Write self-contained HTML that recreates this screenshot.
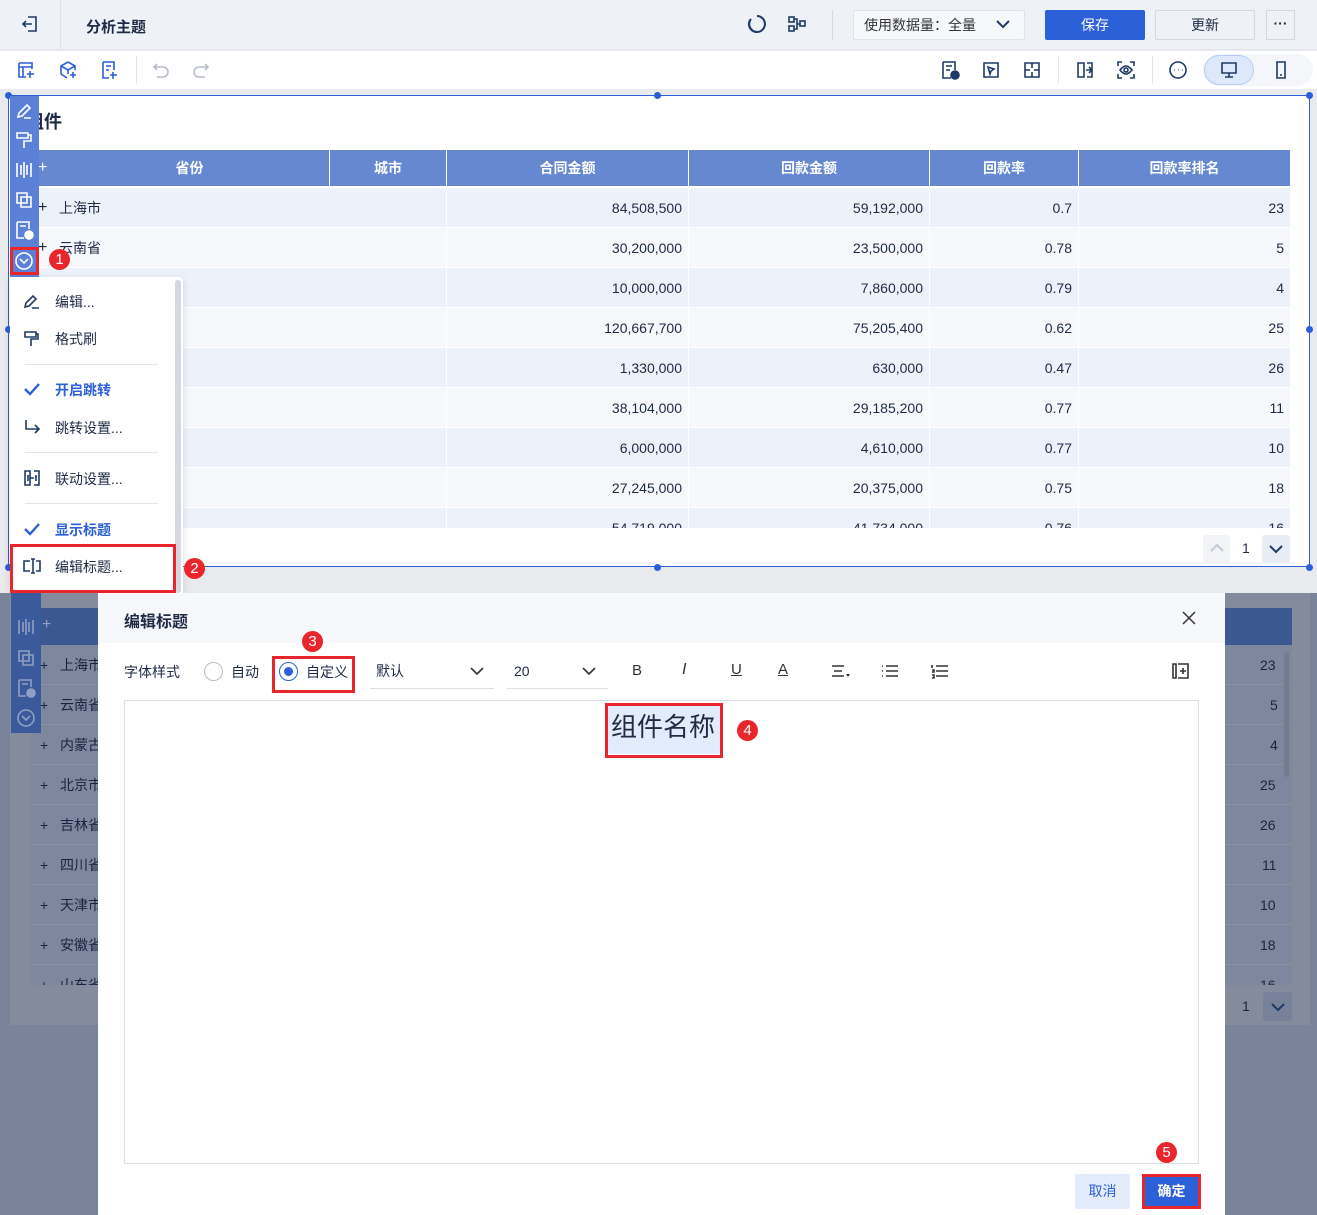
<!DOCTYPE html>
<html><head><meta charset="utf-8"><style>
*{box-sizing:border-box;margin:0;padding:0}
body{width:1317px;height:1215px;overflow:hidden;position:relative;background:#e8eaee;font-family:"Liberation Sans","Noto Sans CJK SC",sans-serif;color:#1f2a44;font-size:14px}
.a{position:absolute}
.ic{position:absolute;fill:none;stroke:#1f3a66;stroke-width:1.6}
.top{left:0;top:0;width:1317px;height:50px;background:#eef1f6;border-bottom:1px solid #e2e5ea}
.tb{left:0;top:51px;width:1317px;height:38px;background:#fff}
.hd{position:absolute;top:150px;height:36px;background:#6688d0;color:#fff;font-weight:bold;text-align:center;line-height:36px;font-size:14px;border-right:1px solid #fff}
.row{position:absolute;left:30px;width:1260px;height:40px;border-bottom:1px solid #fff}
.c{position:absolute;top:0;line-height:40px;text-align:right;font-size:14px;color:#1f2a44}
.badge{position:absolute;width:21px;height:21px;border-radius:50%;background:#e8262b;color:#fff;font-size:15px;line-height:21px;text-align:center}
.rb{position:absolute;border:3px solid #e8262b}
.mi{position:absolute;left:55px;font-size:14px;color:#1f2a44}
.sep{position:absolute;left:25px;width:133px;height:1px;background:#e3e5ea}
.orow{position:absolute;left:30px;width:1262px;height:40px;background:#7d879d;border-bottom:1px solid #8891a5}
.ot{position:absolute;left:30px;line-height:40px;color:#1a2440;font-size:14px}
.op{position:absolute;left:10px;line-height:40px;color:#1a2440}
</style></head><body>

<div class="a top"></div>
<svg class="ic" style="left:20px;top:14px" width="20" height="20" viewBox="0 0 20 20"><path d="M8 3h8v14H8M3 10h9M6 7l-3 3 3 3"/></svg>
<div class="a" style="left:60px;top:0;width:1px;height:50px;background:#dde1e8"></div>
<div class="a" style="left:86px;top:16px;font-weight:bold;font-size:15px">分析主题</div>
<svg class="ic" style="left:747px;top:14px;stroke-width:2" width="20" height="20" viewBox="0 0 20 20"><path d="M10 2a8 8 0 1 1-7 4M10 18A8 8 0 0 1 4 5"/></svg>
<svg class="ic" style="left:787px;top:15px" width="20" height="18" viewBox="0 0 20 18"><rect x="2" y="2" width="5" height="5"/><rect x="2" y="11" width="5" height="5"/><rect x="13" y="6" width="5" height="5"/><path d="M7 4h3v10H7M10 9h3"/></svg>
<div class="a" style="left:832px;top:10px;width:1px;height:30px;background:#d6dae2"></div>
<div class="a" style="left:853px;top:10px;width:172px;height:30px;background:#f6f8fb;border:1px solid #dfe3ea;border-radius:2px;line-height:28px;padding-left:10px;font-size:14px;color:#333">使用数据量：全量</div>
<svg class="ic" style="left:995px;top:18px;stroke-width:2" width="16" height="12" viewBox="0 0 16 12"><path d="M2 3l6 6 6-6"/></svg>
<div class="a" style="left:1045px;top:10px;width:100px;height:30px;background:#2b60d9;color:#fff;text-align:center;line-height:30px;border-radius:2px">保存</div>
<div class="a" style="left:1155px;top:10px;width:100px;height:30px;background:#eef1f6;border:1px solid #d3d7df;text-align:center;line-height:28px;border-radius:2px">更新</div>
<div class="a" style="left:1266px;top:10px;width:29px;height:30px;border:1px solid #d3d7df;text-align:center;line-height:24px;font-weight:bold">···</div>

<div class="a tb"></div>
<svg class="ic" style="left:16px;top:60px;stroke:#2b5fd9" width="20" height="20" viewBox="0 0 20 20"><path d="M3 3h13v6M3 3v14h7M3 7h13M7 7v10M14 11v7M11 14h7"/></svg>
<svg class="ic" style="left:58px;top:60px;stroke:#2b5fd9" width="20" height="20" viewBox="0 0 20 20"><path d="M10 2l7 4v4M10 2L3 6v8l6 4M3 6l7 4 7-4M10 10v4M15 12v6M12 15h6"/></svg>
<svg class="ic" style="left:99px;top:60px;stroke:#2b5fd9" width="20" height="20" viewBox="0 0 20 20"><path d="M4 2h11v8M4 2v16h6M7 6h5M7 10h3M14 12v7M11 15h7"/></svg>
<div class="a" style="left:136px;top:56px;width:1px;height:28px;background:#e3e5ea"></div>
<svg class="ic" style="left:151px;top:61px;stroke:#b6bcc8" width="20" height="18" viewBox="0 0 20 18"><path d="M6 3L3 6l3 3M3 6h9a5 5 0 0 1 0 10H6"/></svg>
<svg class="ic" style="left:191px;top:61px;stroke:#b6bcc8" width="20" height="18" viewBox="0 0 20 18"><path d="M14 3l3 3-3 3M17 6H8a5 5 0 0 0 0 10h6"/></svg>
<svg class="ic" style="left:940px;top:60px" width="20" height="20" viewBox="0 0 20 20"><path d="M3 2h12v8M3 2v16h8M6 6h6M6 10h4"/><circle cx="15" cy="15" r="4" fill="#1f3a66"/></svg>
<svg class="ic" style="left:981px;top:60px" width="20" height="20" viewBox="0 0 20 20"><path d="M3 3h14v14H3zM7 7l6 2-3 2-1 3z"/></svg>
<svg class="ic" style="left:1022px;top:60px" width="20" height="20" viewBox="0 0 20 20"><path d="M3 3h14v14H3zM10 3v5M10 12v5M3 10h5M12 10h5"/></svg>
<div class="a" style="left:1058px;top:56px;width:1px;height:28px;background:#e3e5ea"></div>
<svg class="ic" style="left:1075px;top:60px" width="20" height="20" viewBox="0 0 20 20"><path d="M3 3h6v14H3zM12 3h5v14h-5M11 10h6M14 7l3 3-3 3"/></svg>
<svg class="ic" style="left:1116px;top:60px" width="20" height="20" viewBox="0 0 20 20"><path d="M2 6V2h4M14 2h4v4M2 14v4h4M14 18h4v-4M4 10s3-4 6-4 6 4 6 4-3 4-6 4-6-4-6-4z"/><circle cx="10" cy="10" r="2"/></svg>
<div class="a" style="left:1152px;top:56px;width:1px;height:28px;background:#e3e5ea"></div>
<svg class="ic" style="left:1168px;top:60px" width="20" height="20" viewBox="0 0 20 20"><circle cx="10" cy="10" r="8"/><path d="M6 10h.5M10 10h.5M14 10h.5" stroke-width="2"/></svg>
<div class="a" style="left:1203px;top:54px;width:110px;height:32px;background:#f4f6fa;border-radius:16px"></div>
<div class="a" style="left:1204px;top:55px;width:50px;height:30px;background:#dde8fb;border:1px solid #b8cdf3;border-radius:15px"></div>
<svg class="ic" style="left:1219px;top:60px" width="20" height="20" viewBox="0 0 20 20"><path d="M3 3h14v10H3zM10 13v4M6 17h8"/></svg>
<svg class="ic" style="left:1271px;top:60px" width="20" height="20" viewBox="0 0 20 20"><path d="M6 2h8v16H6zM9 15h2"/></svg>

<div class="a" style="left:8px;top:95px;width:1302px;height:472px;background:#fff;border:1px solid #2b5fd9"></div>
<div class="a" style="left:1283px;top:195px;width:5px;height:125px;background:#dde0e6;border-radius:3px"></div>
<div class="a" style="left:5px;top:92px;width:7px;height:7px;border-radius:50%;background:#2b5fd9"></div>
<div class="a" style="left:654px;top:92px;width:7px;height:7px;border-radius:50%;background:#2b5fd9"></div>
<div class="a" style="left:1306px;top:92px;width:7px;height:7px;border-radius:50%;background:#2b5fd9"></div>
<div class="a" style="left:1306px;top:326px;width:7px;height:7px;border-radius:50%;background:#2b5fd9"></div>
<div class="a" style="left:5px;top:326px;width:7px;height:7px;border-radius:50%;background:#2b5fd9"></div>
<div class="a" style="left:654px;top:564px;width:7px;height:7px;border-radius:50%;background:#2b5fd9"></div>
<div class="a" style="left:1306px;top:564px;width:7px;height:7px;border-radius:50%;background:#2b5fd9"></div>
<div class="a" style="left:5px;top:564px;width:7px;height:7px;border-radius:50%;background:#2b5fd9"></div>
<div class="a" style="left:26px;top:108px;font-size:18px;font-weight:bold">组件</div>

<div class="hd" style="left:30px;width:300px;padding-left:20px">省份</div>
<div class="hd" style="left:330px;width:117px">城市</div>
<div class="hd" style="left:447px;width:242px">合同金额</div>
<div class="hd" style="left:689px;width:241px">回款金额</div>
<div class="hd" style="left:930px;width:149px">回款率</div>
<div class="hd" style="left:1079px;width:211px;border-right:0">回款率排名</div>
<div class="a" style="left:38px;top:159px;color:#fff;font-size:16px;line-height:18px">+</div>

<div class="a" style="left:30px;top:188px;width:1260px;height:340px;overflow:hidden">
<div class="row" style="top:0;left:0;background:#edf1fa"></div>
<div class="row" style="top:40px;left:0;background:#f6f8fc"></div>
<div class="row" style="top:80px;left:0;background:#edf1fa"></div>
<div class="row" style="top:120px;left:0;background:#f6f8fc"></div>
<div class="row" style="top:160px;left:0;background:#edf1fa"></div>
<div class="row" style="top:200px;left:0;background:#f6f8fc"></div>
<div class="row" style="top:240px;left:0;background:#edf1fa"></div>
<div class="row" style="top:280px;left:0;background:#f6f8fc"></div>
<div class="row" style="top:320px;left:0;background:#edf1fa"></div>
<div class="a" style="left:416px;top:0;width:1px;height:340px;background:#fff"></div>
<div class="a" style="left:658px;top:0;width:1px;height:340px;background:#fff"></div>
<div class="a" style="left:899px;top:0;width:1px;height:340px;background:#fff"></div>
<div class="a" style="left:1048px;top:0;width:1px;height:340px;background:#fff"></div>
<div class="c" style="left:8px;top:0;font-size:16px">+</div><div class="c" style="left:29px;top:0">上海市</div>
<div class="c" style="left:8px;top:40px;font-size:16px">+</div><div class="c" style="left:29px;top:40px">云南省</div>
<div class="c" style="right:608px;top:0">84,508,500</div><div class="c" style="right:367px;top:0">59,192,000</div><div class="c" style="right:218px;top:0">0.7</div><div class="c" style="right:6px;top:0">23</div>
<div class="c" style="right:608px;top:40px">30,200,000</div><div class="c" style="right:367px;top:40px">23,500,000</div><div class="c" style="right:218px;top:40px">0.78</div><div class="c" style="right:6px;top:40px">5</div>
<div class="c" style="right:608px;top:80px">10,000,000</div><div class="c" style="right:367px;top:80px">7,860,000</div><div class="c" style="right:218px;top:80px">0.79</div><div class="c" style="right:6px;top:80px">4</div>
<div class="c" style="right:608px;top:120px">120,667,700</div><div class="c" style="right:367px;top:120px">75,205,400</div><div class="c" style="right:218px;top:120px">0.62</div><div class="c" style="right:6px;top:120px">25</div>
<div class="c" style="right:608px;top:160px">1,330,000</div><div class="c" style="right:367px;top:160px">630,000</div><div class="c" style="right:218px;top:160px">0.47</div><div class="c" style="right:6px;top:160px">26</div>
<div class="c" style="right:608px;top:200px">38,104,000</div><div class="c" style="right:367px;top:200px">29,185,200</div><div class="c" style="right:218px;top:200px">0.77</div><div class="c" style="right:6px;top:200px">11</div>
<div class="c" style="right:608px;top:240px">6,000,000</div><div class="c" style="right:367px;top:240px">4,610,000</div><div class="c" style="right:218px;top:240px">0.77</div><div class="c" style="right:6px;top:240px">10</div>
<div class="c" style="right:608px;top:280px">27,245,000</div><div class="c" style="right:367px;top:280px">20,375,000</div><div class="c" style="right:218px;top:280px">0.75</div><div class="c" style="right:6px;top:280px">18</div>
<div class="c" style="right:608px;top:320px">54,719,000</div><div class="c" style="right:367px;top:320px">41,734,000</div><div class="c" style="right:218px;top:320px">0.76</div><div class="c" style="right:6px;top:320px">16</div>
</div>
<div class="a" style="left:1203px;top:535px;width:27px;height:28px;background:#f1f3f7;border-radius:3px"></div>
<svg class="ic" style="left:1209px;top:542px;stroke:#c5cad4;stroke-width:2" width="16" height="12" viewBox="0 0 16 12"><path d="M2 9l6-6 6 6"/></svg>
<div class="a" style="left:1242px;top:540px;font-size:14px">1</div>
<div class="a" style="left:1262px;top:535px;width:28px;height:28px;background:#e7ecf5;border-radius:3px"></div>
<svg class="ic" style="left:1268px;top:543px;stroke-width:2" width="16" height="12" viewBox="0 0 16 12"><path d="M2 3l6 6 6-6"/></svg>

<div class="a" style="left:10px;top:96px;width:29px;height:181px;background:#5b80d6"></div>
<svg class="ic" style="left:14px;top:101px;stroke:#fff" width="20" height="20" viewBox="0 0 20 20"><path d="M4 16l1-4 8-8 3 3-8 8zM10 17h7"/></svg>
<svg class="ic" style="left:14px;top:130px;stroke:#fff" width="20" height="20" viewBox="0 0 20 20"><path d="M3 3h11v5H3zM14 5h3v6h-7v7"/></svg>
<svg class="ic" style="left:14px;top:160px;stroke:#fff" width="20" height="20" viewBox="0 0 20 20"><path d="M3 3v14M7 5v10M10 2v16M13 5v10M17 3v14"/></svg>
<svg class="ic" style="left:14px;top:190px;stroke:#fff" width="20" height="20" viewBox="0 0 20 20"><path d="M3 3h10v10H3zM7 7h10v10H7z"/></svg>
<svg class="ic" style="left:14px;top:220px;stroke:#fff" width="20" height="20" viewBox="0 0 20 20"><path d="M3 2h12v7M3 2v16h7M6 6h6"/><circle cx="15" cy="15" r="4" fill="#fff"/></svg>
<div class="a" style="left:10px;top:247px;width:29px;height:28px;border:3px solid #e8262b"></div>
<svg class="ic" style="left:14px;top:251px;stroke:#fff" width="20" height="20" viewBox="0 0 20 20"><circle cx="10" cy="10" r="8"/><path d="M6 8l4 4 4-4"/></svg>
<div class="badge" style="left:49px;top:249px">1</div>

<div class="a" style="left:10px;top:277px;width:173px;height:316px;background:#fff;box-shadow:0 2px 8px rgba(0,0,0,.12);border-radius:0 4px 0 0"></div>
<div class="a" style="left:175px;top:280px;width:6px;height:313px;background:#d5d8de;border-radius:3px"></div>
<svg class="ic" style="left:23px;top:292px" width="18" height="18" viewBox="0 0 18 18"><path d="M2 15l1-4 7-7 3 3-7 7zM9 16h7"/></svg>
<div class="mi" style="top:292px">编辑...</div>
<svg class="ic" style="left:23px;top:330px" width="18" height="18" viewBox="0 0 18 18"><path d="M2 2h11v5H2zM13 4h2v5H8v7"/></svg>
<div class="mi" style="top:329px">格式刷</div>
<div class="sep" style="top:364px"></div>
<svg class="ic" style="left:23px;top:381px;stroke:#2b60d9;stroke-width:2.4" width="18" height="16" viewBox="0 0 18 16"><path d="M2 8l5 5 9-10"/></svg>
<div class="mi" style="top:380px;color:#2b60d9;font-weight:bold">开启跳转</div>
<svg class="ic" style="left:23px;top:418px" width="18" height="18" viewBox="0 0 18 18"><path d="M3 2v9h13M12 7l4 4-4 4"/></svg>
<div class="mi" style="top:418px">跳转设置...</div>
<div class="sep" style="top:452px"></div>
<svg class="ic" style="left:23px;top:469px" width="18" height="18" viewBox="0 0 18 18"><path d="M2 2h5v14H2zM11 2h5v14h-5M7 9h4M5 6v6M13 6v6"/></svg>
<div class="mi" style="top:469px">联动设置...</div>
<div class="sep" style="top:503px"></div>
<svg class="ic" style="left:23px;top:521px;stroke:#2b60d9;stroke-width:2.4" width="18" height="16" viewBox="0 0 18 16"><path d="M2 8l5 5 9-10"/></svg>
<div class="mi" style="top:520px;color:#2b60d9;font-weight:bold">显示标题</div>
<div class="rb" style="left:10px;top:544px;width:166px;height:49px"></div>
<svg class="ic" style="left:22px;top:557px" width="20" height="18" viewBox="0 0 20 18"><path d="M8 4H2v10h6M14 4h4v10h-4M11 2v14M9 2h4M9 16h4"/></svg>
<div class="mi" style="top:557px">编辑标题...</div>
<div class="badge" style="left:184px;top:558px">2</div>

<div class="a" style="left:0;top:593px;width:1317px;height:622px;background:#79839a"></div>
<div class="a" style="left:10px;top:593px;width:1300px;height:432px;background:#838b9c"></div>
<div class="a" style="left:30px;top:608px;width:1262px;height:37px;background:#3b5891"></div>
<div class="a" style="left:30px;top:645px;width:1262px;height:340px;overflow:hidden">
<div class="orow" style="left:0;top:0"></div><div class="orow" style="left:0;top:40px"></div><div class="orow" style="left:0;top:80px"></div><div class="orow" style="left:0;top:120px"></div><div class="orow" style="left:0;top:160px"></div><div class="orow" style="left:0;top:200px"></div><div class="orow" style="left:0;top:240px"></div><div class="orow" style="left:0;top:280px"></div><div class="orow" style="left:0;top:320px"></div>
<div class="op" style="top:0">+</div><div class="ot" style="top:0">上海市</div>
<div class="op" style="top:40px">+</div><div class="ot" style="top:40px">云南省</div>
<div class="op" style="top:80px">+</div><div class="ot" style="top:80px">内蒙古</div>
<div class="op" style="top:120px">+</div><div class="ot" style="top:120px">北京市</div>
<div class="op" style="top:160px">+</div><div class="ot" style="top:160px">吉林省</div>
<div class="op" style="top:200px">+</div><div class="ot" style="top:200px">四川省</div>
<div class="op" style="top:240px">+</div><div class="ot" style="top:240px">天津市</div>
<div class="op" style="top:280px">+</div><div class="ot" style="top:280px">安徽省</div>
<div class="op" style="top:320px">+</div><div class="ot" style="top:320px">山东省</div>
<div class="ot" style="left:1230px;top:0">23</div><div class="ot" style="left:1240px;top:40px">5</div><div class="ot" style="left:1240px;top:80px">4</div><div class="ot" style="left:1230px;top:120px">25</div><div class="ot" style="left:1230px;top:160px">26</div><div class="ot" style="left:1232px;top:200px">11</div><div class="ot" style="left:1230px;top:240px">10</div><div class="ot" style="left:1230px;top:280px">18</div><div class="ot" style="left:1230px;top:320px">16</div>
</div>
<div class="a" style="left:1284px;top:652px;width:5px;height:125px;background:#737d91;border-radius:3px"></div>
<div class="a" style="left:1242px;top:998px;color:#1a2440">1</div>
<div class="a" style="left:1263px;top:992px;width:29px;height:29px;background:#77819a;border-radius:3px"></div>
<svg class="ic" style="left:1270px;top:1001px;stroke-width:2" width="16" height="12" viewBox="0 0 16 12"><path d="M2 3l6 6 6-6"/></svg>
<div class="a" style="left:11px;top:593px;width:30px;height:140px;background:#3b5a9c"></div>
<svg class="ic" style="left:16px;top:617px;stroke:#8fa0c2" width="20" height="20" viewBox="0 0 20 20"><path d="M3 3v14M7 5v10M10 2v16M13 5v10M17 3v14"/></svg>
<div class="a" style="left:42px;top:616px;color:#8fa0c2;font-size:16px">+</div>
<svg class="ic" style="left:16px;top:648px;stroke:#8fa0c2" width="20" height="20" viewBox="0 0 20 20"><path d="M3 3h10v10H3zM7 7h10v10H7z"/></svg>
<svg class="ic" style="left:16px;top:678px;stroke:#8fa0c2" width="20" height="20" viewBox="0 0 20 20"><path d="M3 2h12v7M3 2v16h7M6 6h6"/><circle cx="15" cy="15" r="4" fill="#8fa0c2"/></svg>
<svg class="ic" style="left:16px;top:708px;stroke:#8fa0c2" width="20" height="20" viewBox="0 0 20 20"><circle cx="10" cy="10" r="8"/><path d="M6 8l4 4 4-4"/></svg>

<div class="a" style="left:98px;top:593px;width:1127px;height:622px;background:#fff"></div>
<div class="a" style="left:98px;top:593px;width:1127px;height:50px;background:#f7f8fb;border-radius:4px 4px 0 0"></div>
<div class="a" style="left:124px;top:608px;font-size:16px;font-weight:bold;color:#1f2a44">编辑标题</div>
<svg class="ic" style="left:1181px;top:610px;stroke:#333;stroke-width:1.5" width="16" height="16" viewBox="0 0 16 16"><path d="M2 2l12 12M14 2L2 14"/></svg>

<div class="a" style="left:124px;top:662px;font-size:14px">字体样式</div>
<div class="a" style="left:204px;top:662px;width:19px;height:19px;border:1px solid #b8bec9;border-radius:50%"></div>
<div class="a" style="left:231px;top:662px">自动</div>
<div class="a" style="left:279px;top:662px;width:19px;height:19px;border:1px solid #2b60d9;border-radius:50%"></div>
<div class="a" style="left:284px;top:667px;width:9px;height:9px;background:#2b60d9;border-radius:50%"></div>
<div class="a" style="left:306px;top:662px">自定义</div>
<div class="rb" style="left:272px;top:656px;width:83px;height:37px"></div>
<div class="badge" style="left:302px;top:631px">3</div>
<div class="a" style="left:370px;top:660px;width:124px;height:29px;border-bottom:1px solid #dcdfe6;padding-left:6px;line-height:22px">默认</div>
<svg class="ic" style="left:469px;top:665px;stroke:#333;stroke-width:1.6" width="16" height="12" viewBox="0 0 16 12"><path d="M2 3l6 6 6-6"/></svg>
<div class="a" style="left:507px;top:660px;width:101px;height:29px;border-bottom:1px solid #dcdfe6;padding-left:7px;line-height:22px">20</div>
<svg class="ic" style="left:581px;top:665px;stroke:#333;stroke-width:1.6" width="16" height="12" viewBox="0 0 16 12"><path d="M2 3l6 6 6-6"/></svg>
<div class="a" style="left:632px;top:662px;font-size:15px;color:#333">B</div>
<div class="a" style="left:682px;top:661px;font-size:16px;font-style:italic;color:#333">I</div>
<div class="a" style="left:731px;top:661px;font-size:15px;color:#333;text-decoration:underline">U</div>
<div class="a" style="left:778px;top:661px;font-size:15px;color:#333;text-decoration:underline">A</div>
<svg class="ic" style="left:830px;top:663px;stroke:#333" width="22" height="16" viewBox="0 0 22 16"><path d="M2 3h12M4 8h8M2 13h12"/><path d="M16 11h4l-2 3z" fill="#333" stroke="none"/></svg>
<svg class="ic" style="left:880px;top:663px;stroke:#333" width="20" height="16" viewBox="0 0 20 16"><path d="M6 3h12M6 8h12M6 13h12M2 3h1M2 8h1M2 13h1"/></svg>
<svg class="ic" style="left:930px;top:663px;stroke:#333" width="20" height="16" viewBox="0 0 20 16"><path d="M6 3h12M6 8h12M6 13h12M2 2v3M2 7h2v2H2M2 12h2v3H2"/></svg>
<svg class="ic" style="left:1171px;top:662px;stroke:#333" width="20" height="18" viewBox="0 0 20 18"><path d="M2 2h3v14H2zM7 2h10v14H7M12 6v6M9 9h6"/></svg>

<div class="a" style="left:124px;top:700px;width:1075px;height:464px;border:1px solid #dcdfe6"></div>
<div class="a" style="left:608px;top:706px;width:112px;height:48px;background:#e2ebfb"></div>
<div class="a" style="left:611px;top:709px;font-size:26px;color:#1f2a44;line-height:36px">组件名称</div>
<div class="rb" style="left:605px;top:703px;width:118px;height:55px"></div>
<div class="badge" style="left:737px;top:720px">4</div>

<div class="a" style="left:1075px;top:1174px;width:55px;height:35px;background:#e3ecfb;color:#2b60d9;text-align:center;line-height:35px;border-radius:2px">取消</div>
<div class="a" style="left:1142px;top:1174px;width:59px;height:35px;background:#2b60d9;color:#fff;text-align:center;line-height:29px;border:3px solid #e8262b;font-weight:bold">确定</div>
<div class="badge" style="left:1156px;top:1142px">5</div>
</body></html>
